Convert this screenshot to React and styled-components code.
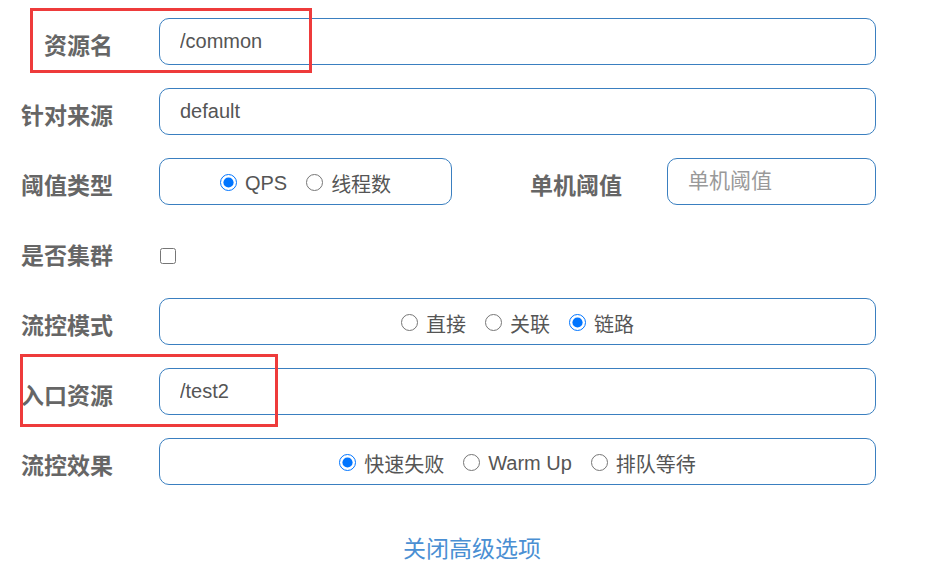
import React from 'react';
import styled, { createGlobalStyle } from 'styled-components';

const GlobalStyle = createGlobalStyle`
  body {
    margin: 0;
    background: #fff;
    font-family: "Liberation Sans", "Noto Sans CJK SC", sans-serif;
  }
`;

const Page = styled.div`
  position: relative;
  width: 944px;
  height: 573px;
  padding: 18px 68px 0 0;
  box-sizing: border-box;
  overflow: hidden;
`;

const Form = styled.div`
  display: flex;
  flex-direction: column;
  gap: 23px;
`;

const Row = styled.div`
  display: flex;
  align-items: center;
  height: 47px;
  gap: 46px;
`;

const Label = styled.label`
  width: ${({ $w }) => $w || 113}px;
  flex-shrink: 0;
  text-align: right;
  font-family: "Noto Sans CJK SC", sans-serif;
  font-weight: 700;
  font-size: 23px;
  color: #666;
  padding-top: 4px;
  white-space: nowrap;
`;

const Input = styled.input`
  flex: 1;
  width: 0;
  min-width: 0;
  height: 47px;
  box-sizing: border-box;
  border: 1px solid #3a7fc0;
  border-radius: 10px;
  padding: 0 20px;
  font-family: "Liberation Sans", "Noto Sans CJK SC", sans-serif;
  font-size: 20px;
  color: #555;
  outline: none;
  &::placeholder {
    color: #999;
    font-family: "Noto Sans CJK SC", sans-serif;
    font-size: 21px;
  }
`;

const RadioBox = styled.div`
  ${({ $w }) => ($w ? `width: ${$w}px; flex-shrink: 0;` : 'flex: 1;')}
  height: 47px;
  box-sizing: border-box;
  border: 1px solid #3a7fc0;
  border-radius: 10px;
  display: flex;
  align-items: center;
  justify-content: center;
  gap: 19px;
  padding-top: 4px;
`;

const Option = styled.label`
  display: flex;
  align-items: center;
  gap: 8px;
  font-family: "Liberation Sans", "Noto Sans CJK SC", sans-serif;
  font-size: 20px;
  color: #555;
  input {
    width: 17px;
    height: 17px;
    margin: 0 0 3px 0;
  }
`;

const Split = styled.div`
  flex: 1;
  min-width: 0;
  display: flex;
  align-items: center;
  gap: 45px;
`;

const Check = styled.input`
  width: 16px;
  height: 16px;
  margin: 9px 0 0 1px;
`;

const LinkRow = styled.div`
  display: flex;
  justify-content: center;
  padding: 45px 0 0 68px;
`;

const Link = styled.a`
  font-family: "Noto Sans CJK SC", sans-serif;
  font-size: 23px;
  color: #4a8fd3;
  text-decoration: none;
  cursor: pointer;
`;

const Highlight = styled.div`
  position: absolute;
  left: ${({ $x }) => $x}px;
  top: ${({ $y }) => $y}px;
  width: ${({ $w }) => $w}px;
  height: ${({ $h }) => $h}px;
  border: 3px solid #ee3b3b;
  box-sizing: border-box;
  pointer-events: none;
`;

const Radios = ({ name, options, checked }) =>
  options.map((o) => (
    <Option key={o}>
      <input type="radio" name={name} defaultChecked={o === checked} />
      {o}
    </Option>
  ));

export default function App() {
  return (
    <>
      <GlobalStyle />
      <Page>
        <Form>
          <Row>
            <Label>资源名</Label>
            <Input defaultValue="/common" />
          </Row>
          <Row>
            <Label>针对来源</Label>
            <Input defaultValue="default" />
          </Row>
          <Row>
            <Label>阈值类型</Label>
            <Split>
              <RadioBox $w={293}>
                <Radios name="grade" options={['QPS', '线程数']} checked="QPS" />
              </RadioBox>
              <Label $w={125}>单机阈值</Label>
              <Input placeholder="单机阈值" />
            </Split>
          </Row>
          <Row>
            <Label>是否集群</Label>
            <Check type="checkbox" />
          </Row>
          <Row>
            <Label>流控模式</Label>
            <RadioBox>
              <Radios name="strategy" options={['直接', '关联', '链路']} checked="链路" />
            </RadioBox>
          </Row>
          <Row>
            <Label>入口资源</Label>
            <Input defaultValue="/test2" />
          </Row>
          <Row>
            <Label>流控效果</Label>
            <RadioBox>
              <Radios name="behavior" options={['快速失败', 'Warm Up', '排队等待']} checked="快速失败" />
            </RadioBox>
          </Row>
        </Form>
        <LinkRow>
          <Link>关闭高级选项</Link>
        </LinkRow>
        <Highlight $x={30} $y={8} $w={282} $h={65} />
        <Highlight $x={20} $y={354} $w={258} $h={73} />
      </Page>
    </>
  );
}
